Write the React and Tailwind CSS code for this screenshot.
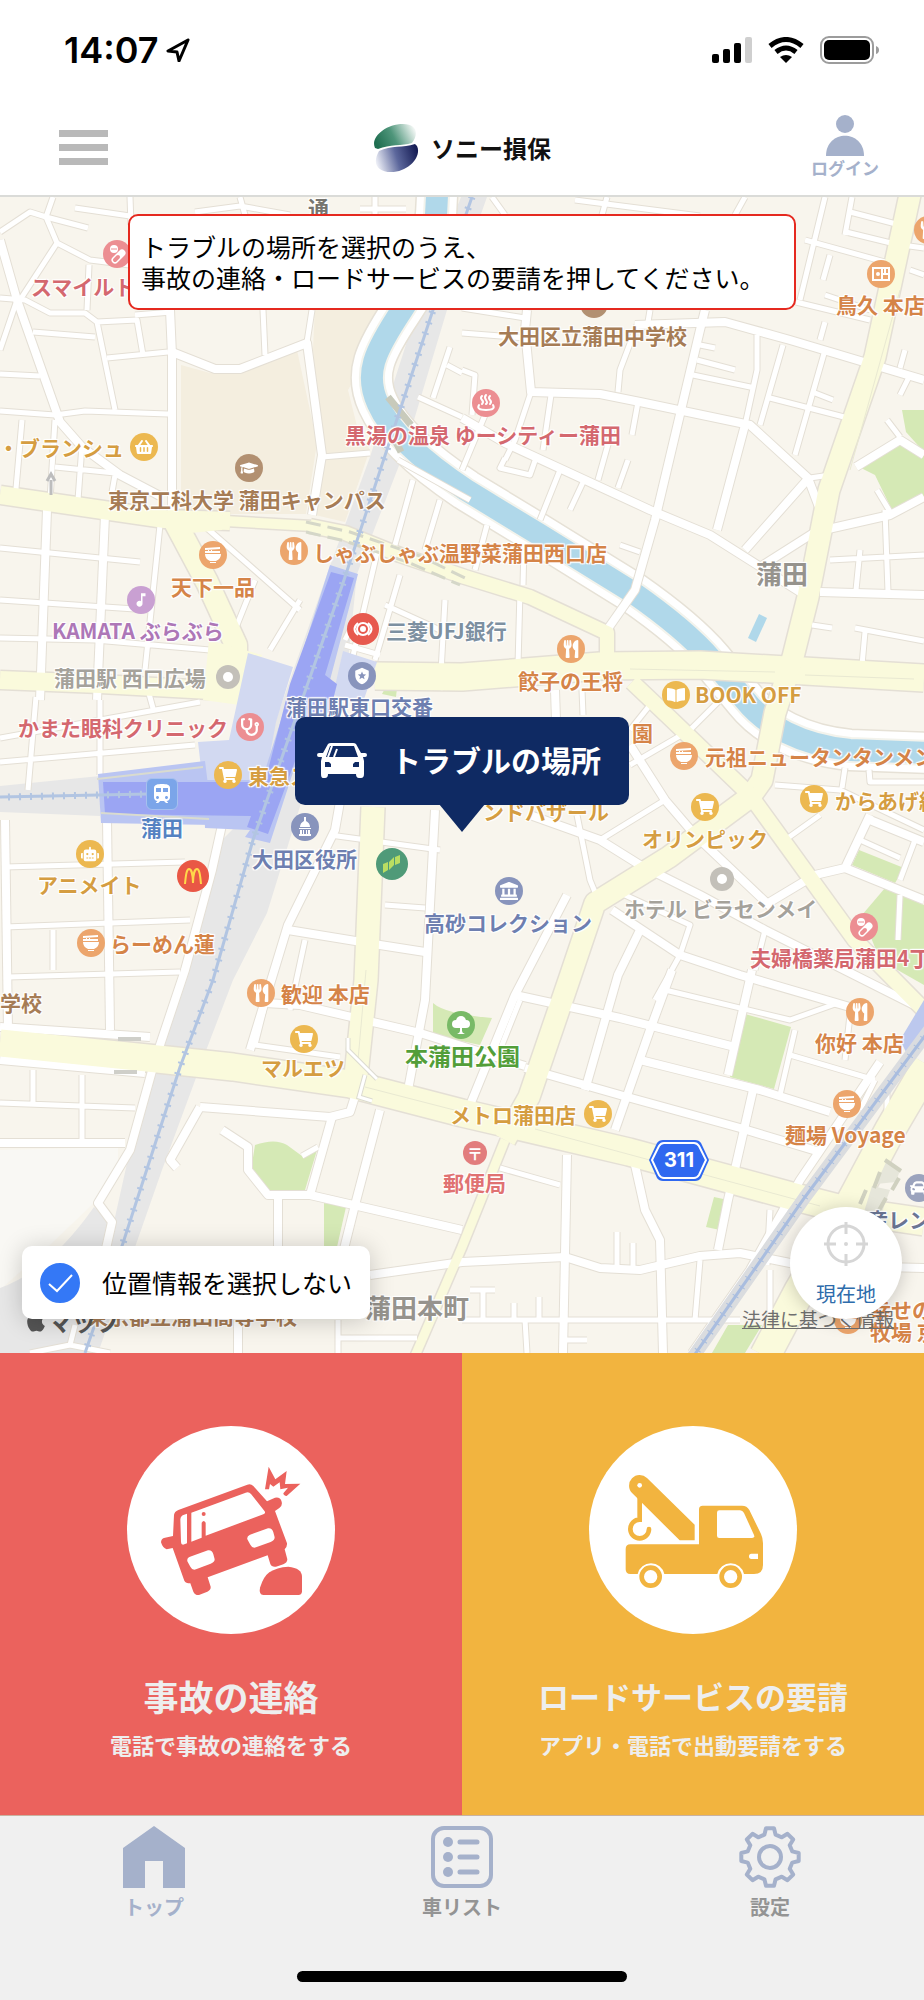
import React, { useState } from 'react';
import {
  FaUtensils,
  FaShoppingCart,
  FaShoppingBasket,
  FaGraduationCap,
  FaBookOpen,
  FaLandmark,
  FaStethoscope,
  FaRobot,
  FaCar,
  FaApple,
} from 'react-icons/fa';
import { MdMusicNote, MdTrain, MdLocalPolice } from 'react-icons/md';

// the map is drawn on this canvas, pins use the same units
const MAP = { x: 0, y: 197, w: 924, h: 1156 };

const river =
  'M437 190 C437 240 426 275 402 310 C374 352 364 374 378 404 C392 436 430 466 466 490 L540 535 L632 592 C665 615 695 640 712 660 L745 700 C765 725 800 745 850 750 L930 753';

const mainRail = 'M472 197 L433 310 L343 583 L253 840 L213 980 L180 1067 L123 1243 L85 1353';
const eastRail = 'M930 1029 L805 1197 L693 1357';

const wideRoads = [
  'M0 240 L17 300 L60 422 L82 447 L120 475 L160 496',
  'M170 310 L172 355 L172 515',
  'M172 352 L215 369 L240 369 L307 343 L322 455 L312 515',
  'M47 510 L40 700',
  'M105 515 L97 700',
  'M107 820 L110 1030',
  'M5 820 L8 1030',
  'M222 825 L212 870 L185 970 L155 1060 L130 1150 L98 1203 L112 1222 L103 1262',
  'M350 745 L335 830 L288 925 L250 1050',
  'M435 810 L425 1000 L408 1090',
  'M288 930 L380 945 L425 952',
  'M265 1003 L300 1005 L420 1033 L525 1066',
  'M525 1068 L620 1095 L740 1128 L820 1152',
  'M515 995 L620 1018 L735 1047',
  'M640 1060 L760 1090 L830 1112',
  'M567 895 L515 995 L468 1110',
  'M752 970 L728 1075 M753 1090 L728 1200 L718 1250',
  'M672 970 L650 1030 L615 1130',
  'M640 930 L618 975 L585 1090',
  'M630 745 L665 800 L695 835 L772 908',
  'M530 815 L600 840 L640 865 L700 895 L765 930 L924 1010',
  'M612 910 L680 955 L740 975 L860 1010',
  'M765 905 L815 875 L845 868 L870 815',
  'M870 820 L924 842 M845 868 L924 900',
  'M567 1155 L563 1353',
  'M635 1165 L645 1210 L660 1240 L663 1353',
  'M370 1275 L462 1262 L565 1257 L600 1268 L640 1270 L700 1256 L740 1253 L800 1265 L924 1268',
  'M200 1107 L330 1117 L350 1112 L357 1090',
  'M200 1107 L170 1160 L177 1168',
  'M222 1130 L248 1147 L248 1170 L268 1195 L310 1195 L462 1230',
  'M332 1117 L310 1195 M278 1195 L278 1260',
  'M380 1110 L355 1205 L340 1265',
  'M635 325 L725 322 L790 340 L924 380',
  'M705 310 L700 330 L655 520 L635 590 L607 630',
  'M527 310 L525 330 L531 392 L600 394 L640 402 L750 425 L808 478 L822 515',
  'M462 418 L505 443 L650 510 L710 535 L800 592',
  'M745 425 L717 530 M807 480 L745 550',
  'M760 567 L815 532 L890 515 L924 497',
  'M880 1062 L800 1180 L750 1270 L692 1353',
  'M238 1320 L238 1353',
  'M820 592 L924 595 M856 467 L900 440 L924 455',
  'M0 1060 L145 1073 M0 1143 L125 1143',
  'M0 1027 L150 1037',
  'M555 690 L556 720',
];

const narrowRoads = [
  'M0 232 L30 212 L46 217 M53 197 L46 217 L57 243 L20 300 M57 243 L90 260 L130 265',
  'M75 208 L130 216 M46 217 L88 228 M130 197 L131 225 M17 300 L0 350',
  'M0 298 L25 300 L50 313 L85 313 L97 322 L137 320 L143 355 M97 322 L115 410',
  'M33 332 L95 337 M107 358 L168 352 M89 265 L87 310 M0 374 L40 376',
  'M0 411 L55 415 L85 411 L168 414 M312 310 L307 342 M263 310 L265 355',
  'M172 312 L135 315 M322 457 L370 453 M195 212 L240 206 L290 215 M240 197 L245 215 M375 197 V215 M360 209 H406',
  'M22 420 L15 500 M55 420 L50 500 M55 467 L115 473 M82 445 L78 500 M115 475 L112 492',
  'M0 548 L140 562 M160 525 L145 670 M0 600 L150 610 M0 638 L95 640 L210 650',
  'M36 697 L28 790 M0 738 L200 702 M0 762 L195 745 M100 700 V775 M148 690 L154 712',
  'M5 867 L185 862 M5 927 L190 920 M8 977 L180 972 M53 930 V970',
  'M33 1070 V1105 M82 1075 V1140 M0 1103 L135 1108',
  'M330 835 L440 850 M385 905 L425 908 M305 940 L290 1010 M265 1005 L255 1045 L340 1057',
  'M318 1147 L302 1156 M338 1320 V1353 M338 1338 H417 M75 1325 L70 1345 L30 1353 M70 1345 L110 1353',
  'M400 575 L375 660 M385 605 L440 630 M345 645 L380 655 M355 620 L345 640 M445 600 L440 690',
  'M255 580 L235 630 M300 600 L270 650 M200 522 L300 610 M380 540 L345 690',
  'M582 690 L583 715 M650 705 L630 730 M720 700 L690 730 L630 765 M665 800 L600 840 M577 815 L590 880 L597 897',
  'M614 890 L690 925 L680 955 L655 1000 M765 930 L755 970 M665 990 L790 1020 L838 1003',
  'M520 1000 L500 1050 M795 1030 L780 1095 M790 1055 L875 1080 M850 1015 L845 1060 M875 1080 L860 1110 M887 1085 V1120',
  'M500 1168 L560 1185 M700 1260 L695 1320 M462 1320 H740 M525 1320 L527 1353 M617 1232 V1265 M633 1243 V1268',
  'M483 1290 V1318 M470 1290 H495 M514 1303 V1318 M539 1297 V1318 M770 1210 L767 1265 M805 1190 L770 1240 M770 1270 V1320 M565 1340 H587',
  'M775 785 L840 790 L924 830 M845 768 L842 788 M869 770 L870 782 H924 M860 840 L900 858 M915 840 L900 880 M820 815 L785 840 M900 895 L898 940',
  'M860 550 L856 590 M885 510 L888 592 M812 625 L832 628 M855 628 L924 641 M865 632 L862 665 M830 560 L924 555 M877 490 L892 515 M887 420 L900 437',
  'M745 197 L735 215 M607 197 L602 215 M492 197 L505 215 M575 200 L700 216 M825 197 L800 300 M805 240 L885 262 M852 197 L845 235 M850 212 L900 225 M846 232 L895 244 L924 248',
  'M830 255 L823 280 M825 295 L870 310 M796 302 L870 320 M910 270 L924 275 M637 325 L620 370 L618 392 M650 310 L648 322 M462 308 L525 318 M462 333 L525 338',
  'M531 392 L515 440 L505 460 M551 395 L543 450 M638 402 L632 435 M700 345 L715 348 M697 360 L735 370 M693 375 L755 388 M757 335 V370 L745 425',
  'M783 345 L760 425 M825 322 L820 340 M825 350 L795 455 M770 398 L848 418 M815 393 L833 400 M830 475 L810 478 M905 350 L900 368 M910 375 L900 395',
  'M505 458 L500 468 L530 475 L537 455 M560 470 L540 520 M585 478 L570 510 M612 430 L598 480 M628 460 L618 488 M462 470 L485 415 M462 370 L475 375 L472 415',
  'M450 347 L433 398 M447 365 L462 373 M418 397 L462 417 M398 460 L470 500 M413 480 L395 545 M440 500 L425 550 M487 525 L475 570 M524 545 L523 585 M520 590 L518 665 M620 545 L640 552',
];

const mainYellow = [
  { d: 'M0 495 L110 511 L165 519 L230 521', w: 18 },
  { d: 'M225 521 L312 526', w: 10 },
  { d: 'M310 526 L345 533 L400 555 L465 577 L530 597 L607 633 L607 665', w: 14 },
  { d: 'M0 680 L100 684 L210 690 L240 680', w: 18 },
  { d: 'M375 676 L462 677 L600 666 L700 665 L924 678', w: 27 },
  { d: 'M911 190 L875 357 L829 490 L808 597 L793 657 L775 713 L762 780 L750 797', w: 21 },
  { d: 'M632 682 L672 720 L750 795 L855 940 L930 1016', w: 15 },
  { d: 'M750 797 L669 857 L595 903 L569 980 L529 1097 L505 1140', w: 21 },
  { d: 'M505 1140 L462 1247 L415 1356', w: 9 },
  { d: 'M373 807 L366 980 L355 1085', w: 23 },
  { d: 'M175 522 L207 582 L236 645 L236 700', w: 22 },
  { d: 'M0 1043 L167 1060 L233 1067 L350 1084 L462 1113 L629 1152 L795 1197 L850 1211 L924 1222', w: 27 },
  { d: 'M928 1065 L890 1130 L850 1205 L800 1290 L765 1356', w: 30 },
];

const parks = [
  'M859 467 L902 440 L924 453 V497 L892 510 L875 475Z',
  'M902 410 L924 410 V452 L906 432Z',
  'M859 850 L904 868 L895 883 L852 865Z',
  'M885 888 L924 905 V985 L880 960 L862 915Z',
  'M433 1003 Q445 1014 492 1018 L480 1045 L433 1035Z',
  'M255 1145 Q275 1138 287 1145 L302 1156 L317 1150 L305 1190 H267 L251 1170Z',
  'M324 1203 L346 1207 L337 1247 H324Z',
  'M745 1014 L791 1027 L774 1089 L730 1077Z',
  'M714 1197 L728 1200 L720 1230 L706 1227Z',
  'M728 1325 H762 L745 1353 H712Z',
  'M354 388 Q362 410 378 422 L368 424 Q354 410 354 388Z',
  'M226 664 Q231 650 237 657 Q239 664 230 668Z',
  'M382 694 Q388 682 397 688 L396 697Z',
];

function MapDrawing() {
  return (
    <svg viewBox="0 197 924 1156" className="block h-full w-full" aria-hidden="true">
      <rect x={MAP.x} y={MAP.y} width={MAP.w} height={MAP.h} fill="#f8f5ed" />

      {/* school grounds */}
      <g fill="#f4eedf">
        <path d="M181 365 L210 373 L240 374 L297 350 L317 443 L306 514 H181Z" />
        <path d="M315 303 H390 L365 360 L348 390 L358 430 L370 450 L323 455 L313 350Z" />
        <path d="M325 460 L368 455 L345 522 L315 515Z" />
      </g>
      {parks.map((d) => (
        <path key={d} d={d} fill="#d5e9b5" />
      ))}
      <path d="M0 1150 L118 1147 L118 1162 L94 1203 L50 1245 L0 1290Z" fill="#f9f8f4" />

      {/* railway land */}
      <g fill="#e7e7e7">
        <path d="M461 197 H487 L447 310 L405 450 L357 574 L345 690 L302 800 L267 913 L233 980 L207 1048 L162 1170 L98 1353 H0 V1288 Q50 1270 94 1207 L112 1222 L105 1262 L130 1150 L160 1048 L203 913 L222 840 L240 822 L330 566 L370 457 L417 310Z" />
        <path d="M0 786 L100 776 V816 L0 812Z" />
      </g>

      <path d={river} fill="none" stroke="#e6e1d6" strokeWidth="43" />
      <path d={river} fill="none" stroke="#ffffff" strokeWidth="40" />
      <path d={river} fill="none" stroke="#f3f3ec" strokeWidth="26" />
      <path d={river} fill="none" stroke="#b0d8ea" strokeWidth="22" />
      <path d="M759 614 L767 618 L756 642 L748 638Z" fill="#b0d8ea" />

      <g fill="none" strokeLinejoin="round">
        <g stroke="#e4dfd5">
          {narrowRoads.map((d) => <path key={d} d={d} strokeWidth="7" />)}
          {wideRoads.map((d) => <path key={d} d={d} strokeWidth="10" />)}
          {mainYellow.map((r) => <path key={r.d} d={r.d} strokeWidth={r.w + 3} />)}
        </g>
        <g stroke="#ffffff">
          {narrowRoads.map((d) => <path key={d} d={d} strokeWidth="5" />)}
          {wideRoads.map((d) => <path key={d} d={d} strokeWidth="8" />)}
        </g>
        <g stroke="#fafadc">
          {mainYellow.map((r) => <path key={r.d} d={r.d} strokeWidth={r.w} />)}
        </g>
        <g stroke="#e9e9d2">
          <path d="M630 669 L775 672 M805 675 L914 679 M366 970 L358 1060 M365 1087 L462 1112 M535 1129 L820 1206 M900 290 L850 470" />
        </g>
      </g>
      <path d="M209 640 L262 655 L240 705 L203 700Z" fill="#fafadc" />
      <path d="M165 512 L225 516 L222 530 L170 535Z" fill="#fafadc" />

      {/* footbridges */}
      <path d="M348 1038 V1050 L377 1079 M365 1075 L359 1097 L372 1101" fill="none" stroke="#dcdbd0" strokeWidth="5" />
      <path d="M348 1038 V1050 L377 1079 M365 1075 L359 1097 L372 1101" fill="none" stroke="#fff" strokeWidth="3" />
      <g stroke="#d5d7c8" strokeWidth="3" strokeDasharray="15 7" fill="none">
        <path d="M306 522 L350 532 L420 556 L465 578" />
        <path d="M306 532 L345 541 L410 563 L460 585" />
      </g>
      <path d="M118 1039 H141 M114 1072 H137" stroke="#cfcfc9" strokeWidth="4" />
      <path d="M388 397 L411 425 M395 440 L401 452" stroke="#c8cabb" strokeWidth="7" />
      <path d="M887 1160 L900 1170 L896 1182 L876 1184Z M872 1186 L890 1190 L882 1212 H864Z" fill="#e6e6da" />
      <path d="M885 1160 L901 1171 M880 1172 L874 1188 M899 1178 L892 1190 M866 1190 L860 1204 M886 1198 L878 1212" stroke="#d0d1c0" strokeWidth="4" />

      {/* station buildings */}
      <path d="M248 653 L293 667 L276 722 L265 782 L203 785 L198 742 L229 740Z" fill="#d2d9f1" />
      <path d="M343 651 L377 662 L363 702 L333 695Z" fill="#d2d9f1" />
      <path d="M98 774 L205 761 L213 825 L101 823Z" fill="#bac5f2" />
      <path d="M330 565 L358 574 L330 680 L337 710 L310 720 L270 843 L245 837 L250 830 L205 828 L203 780 L262 780Z" fill="#bac5f2" />
      <path d="M331 572 L354 578 L325 675 L337 684 L330 712 L311 718 L268 834 L247 827 L251 816 L105 814 L103 782 L265 782 L290 684Z" fill="#9ba5f3" />
      <path d="M97 779 L203 767 M101 813 L209 819" stroke="#d9dbcf" strokeWidth="2" />
      <path d="M900 1040 L924 1000 V1035 L908 1056Z" fill="#bcc8ee" />

      {/* tracks with sleepers */}
      <g fill="none">
        <path d={eastRail} stroke="#dadcdf" strokeWidth="13" />
        <path d={eastRail} stroke="#a9bddf" strokeWidth="3" />
        <path d={eastRail} stroke="#a9bddf" strokeWidth="7" strokeDasharray="1 10" />
        <path d={mainRail} stroke="#b2c5e2" strokeWidth="3" />
        <path d={mainRail} stroke="#b2c5e2" strokeWidth="7" strokeDasharray="2 9" />
        <path d="M0 797 L148 794" stroke="#b2c5e2" strokeWidth="3" />
        <path d="M8 797 L148 794" stroke="#b2c5e2" strokeWidth="7" strokeDasharray="2 9" />
      </g>
      <path d="M51 495 V480 M47 481 L51 474 L55 481" fill="none" stroke="#bdbdbd" strokeWidth="3" />

      {/* road shield */}
      <path d="M663 1140 H695 Q699 1140 701 1143 L709 1160 L701 1178 Q699 1181 695 1181 H663 Q659 1181 657 1178 L649 1160 L657 1143 Q659 1140 663 1140Z" fill="#2f68f0" />
      <path d="M664 1143 H694 Q697 1143 699 1146 L706 1160 L699 1175 Q697 1178 694 1178 H664 Q661 1178 659 1175 L652 1160 L659 1146 Q661 1143 664 1143Z" fill="none" stroke="#fff" strokeWidth="2" />
    </svg>
  );
}

const HotSpring = () => (
  <svg viewBox="0 0 20 20" className="h-5 w-5" fill="none" stroke="currentColor" strokeWidth="2" strokeLinecap="round">
    <path d="M6 3q-2 2 0 4t0 4M10 2q-2 2 0 5t0 4M14 3q-2 2 0 4t0 4" />
    <path d="M3 12q-3 5 7 5t7-5" />
  </svg>
);

const Arches = () => (
  <svg viewBox="0 0 20 20" className="h-5 w-5" fill="none" stroke="#ffd84a" strokeWidth="2">
    <path d="M2 18C3 7 4 3 6 3s4 5 4 14c0-9 2-14 4-14s3 4 4 15" />
  </svg>
);

const BankMark = () => (
  <svg viewBox="0 0 20 20" className="h-5 w-5" fill="none" stroke="currentColor" strokeWidth="2">
    <circle cx="10" cy="10" r="6" />
    <circle cx="10" cy="10" r="2" fill="currentColor" />
    <path d="M5 4Q-2 10 5 16M15 4q7 6 0 12" />
  </svg>
);

const GreenBank = () => (
  <svg viewBox="0 0 20 20" className="h-5 w-5" fill="#b9dd62">
    <path d="M1 10l5-2v8l-5 3zM7 8l5-5v8l-5 5zM13 3l5-2v8l-5 2z" />
  </svg>
);

const DomeHall = () => (
  <svg viewBox="0 0 20 20" className="h-5 w-5" fill="currentColor">
    <path d="M9 0h2v4q4 2 4 6H5q0-4 4-6zM4 11h12v1H4zM5 13h2v4H5zM8 13h1v4H8zM11 13h1v4h-1zM13 13h2v4h-2zM4 17h12v2H4z" />
  </svg>
);

const Pills = () => (
  <svg viewBox="0 0 20 20" className="h-5 w-5">
    <circle cx="7" cy="5" r="4" fill="currentColor" />
    <path d="M4 5h6" stroke="#ec8e92" strokeWidth="1" />
    <path d="M8 16L15 9" stroke="currentColor" strokeWidth="7" strokeLinecap="round" />
    <path d="M8 16l3-3" stroke="#ec8e92" strokeWidth="4" strokeLinecap="round" />
  </svg>
);

const Ramen = () => (
  <svg viewBox="0 0 20 20" className="h-5 w-5" fill="currentColor">
    <path d="M2 3l15-1v2L2 5zM2 6h15v2H2zM5 3h1v5H5zM8 3h1v5H8z" />
    <path d="M2 9h16q0 5-5 7H7q-5-2-5-7zM7 17h6v1H7z" />
  </svg>
);

const Bento = () => (
  <svg viewBox="0 0 20 20" className="h-5 w-5" fill="none" stroke="currentColor" strokeWidth="2">
    <rect x="2" y="4" width="16" height="12" />
    <path d="M11 4v12M11 10h7M14 4v6" />
    <circle cx="7" cy="10" r="1" fill="currentColor" />
  </svg>
);

const Tree = () => (
  <svg viewBox="0 0 20 20" className="h-5 w-5" fill="currentColor">
    <circle cx="5" cy="9" r="4" />
    <circle cx="10" cy="6" r="5" />
    <circle cx="15" cy="9" r="4" />
    <path d="M5 10h10v3H5zM9 12h2v4q0 2 3 3H6q3-1 3-3z" />
  </svg>
);

const Dot = () => <span className="block h-[10px] w-[10px] rounded-full bg-white" />;
const Post = () => <span className="text-base font-bold leading-none">〒</span>;

const pins = [
  { x: 117, y: 254, bg: 'bg-[#ec8e92]', Icon: Pills },
  { x: 144, y: 447, bg: 'bg-[#ecb850]', Icon: FaShoppingBasket },
  { x: 249, y: 468, bg: 'bg-[#b29071]', Icon: FaGraduationCap },
  { x: 213, y: 555, bg: 'bg-[#eca56c]', Icon: Ramen },
  { x: 294, y: 551, bg: 'bg-[#eca56c]', Icon: FaUtensils },
  { x: 486, y: 403, bg: 'bg-[#ec8e92]', Icon: HotSpring },
  { x: 594, y: 304, bg: 'bg-[#b29071]', Icon: FaGraduationCap },
  { x: 881, y: 274, bg: 'bg-[#eca56c]', Icon: Bento },
  { x: 928, y: 230, bg: 'bg-[#eca56c]', Icon: FaUtensils },
  { x: 141, y: 600, bg: 'bg-[#c9a0d2]', Icon: MdMusicNote },
  { x: 363, y: 629, bg: 'bg-[#e7594e]', Icon: BankMark, big: true },
  { x: 362, y: 676, bg: 'bg-[#8894bc]', Icon: MdLocalPolice },
  { x: 228, y: 677, bg: 'bg-[#c3c0b9]', Icon: Dot, small: true },
  { x: 250, y: 727, bg: 'bg-[#ec8e92]', Icon: FaStethoscope },
  { x: 228, y: 775, bg: 'bg-[#ecb850]', Icon: FaShoppingCart },
  { x: 90, y: 854, bg: 'bg-[#ecb850]', Icon: FaRobot },
  { x: 193, y: 876, bg: 'bg-[#e95745]', Icon: Arches, big: true },
  { x: 305, y: 827, bg: 'bg-[#8894bc]', Icon: DomeHall },
  { x: 392, y: 864, bg: 'bg-[#4f9a78]', Icon: GreenBank, big: true },
  { x: 91, y: 943, bg: 'bg-[#eca56c]', Icon: Ramen },
  { x: 571, y: 649, bg: 'bg-[#eca56c]', Icon: FaUtensils },
  { x: 676, y: 695, bg: 'bg-[#ecb850]', Icon: FaBookOpen },
  { x: 684, y: 756, bg: 'bg-[#eca56c]', Icon: Ramen },
  { x: 705, y: 807, bg: 'bg-[#ecb850]', Icon: FaShoppingCart },
  { x: 814, y: 799, bg: 'bg-[#ecb850]', Icon: FaShoppingCart },
  { x: 722, y: 879, bg: 'bg-[#c3c0b9]', Icon: Dot, small: true },
  { x: 864, y: 927, bg: 'bg-[#ec8e92]', Icon: Pills },
  { x: 509, y: 891, bg: 'bg-[#8894bc]', Icon: FaLandmark },
  { x: 261, y: 993, bg: 'bg-[#eca56c]', Icon: FaUtensils },
  { x: 304, y: 1039, bg: 'bg-[#ecb850]', Icon: FaShoppingCart },
  { x: 461, y: 1025, bg: 'bg-[#78ba66]', Icon: Tree },
  { x: 475, y: 1153, bg: 'bg-[#e27d7d]', Icon: Post, small: true },
  { x: 598, y: 1114, bg: 'bg-[#ecb850]', Icon: FaShoppingCart },
  { x: 860, y: 1012, bg: 'bg-[#eca56c]', Icon: FaUtensils },
  { x: 847, y: 1104, bg: 'bg-[#eca56c]', Icon: Ramen },
  { x: 919, y: 1188, bg: 'bg-[#9ba3bd]', Icon: FaCar },
  { x: 848, y: 1320, bg: 'bg-[#eca56c]', Icon: Ramen },
];

const ORANGE = 'text-[#d58448]';
const AMBER = 'text-[#d59d41]';
const PINK = 'text-[#d4686f]';
const BROWN = 'text-[#a67c55]';
const NAVY = 'text-[#6e7fb0]';
const GRAY = 'text-[#a5a29b]';

const places = [
  { x: 308, y: 208, name: '通', color: 'text-[#77756f]' },
  { x: 31, y: 287, name: 'スマイルト', color: PINK },
  { x: -2, y: 448, name: '・ブランシュ', color: AMBER },
  { x: 108, y: 500, name: '東京工科大学 蒲田キャンパス', color: BROWN },
  { x: 171, y: 587, name: '天下一品', color: ORANGE },
  { x: 313, y: 553, name: 'しゃぶしゃぶ温野菜蒲田西口店', color: ORANGE },
  { x: 345, y: 435, name: '黒湯の温泉 ゆーシティー蒲田', color: PINK },
  { x: 498, y: 336, name: '大田区立蒲田中学校', color: BROWN },
  { x: 836, y: 305, name: '鳥久 本店', color: ORANGE },
  { x: 52, y: 631, name: 'KAMATA ぶらぶら', color: 'text-[#ad77b7]' },
  { x: 386, y: 631, name: '三菱UFJ銀行', color: 'text-[#7d90a1]' },
  { x: 286, y: 707, name: '蒲田駅東口交番', color: NAVY },
  { x: 54, y: 678, name: '蒲田駅 西口広場', color: GRAY },
  { x: 18, y: 728, name: 'かまた眼科クリニック', color: PINK },
  { x: 248, y: 776, name: '東急スト', color: AMBER },
  { x: 141, y: 828, name: '蒲田', color: 'text-[#5582c2]' },
  { x: 37, y: 885, name: 'アニメイト', color: AMBER },
  { x: 252, y: 859, name: '大田区役所', color: NAVY },
  { x: 110, y: 944, name: 'らーめん蓮', color: ORANGE },
  { x: 518, y: 681, name: '餃子の王将', color: ORANGE },
  { x: 695, y: 695, name: 'BOOK OFF', color: AMBER },
  { x: 632, y: 733, name: '園', color: ORANGE },
  { x: 705, y: 757, name: '元祖ニュータンタンメン', color: ORANGE },
  { x: 642, y: 839, name: 'オリンピック', color: AMBER },
  { x: 835, y: 801, name: 'からあげ縁', color: AMBER },
  { x: 483, y: 812, name: 'ンドバザール', color: AMBER },
  { x: 624, y: 909, name: 'ホテル ビラセンメイ', color: GRAY },
  { x: 750, y: 958, name: '夫婦橋薬局蒲田4丁目', color: PINK },
  { x: 424, y: 923, name: '高砂コレクション', color: NAVY },
  { x: 0, y: 1003, name: '学校', color: BROWN },
  { x: 281, y: 994, name: '歓迎 本店', color: ORANGE },
  { x: 261, y: 1068, name: 'マルエツ', color: AMBER },
  { x: 443, y: 1183, name: '郵便局', color: 'text-[#e07272]' },
  { x: 450, y: 1115, name: 'メトロ蒲田店', color: AMBER },
  { x: 815, y: 1043, name: '你好 本店', color: ORANGE },
  { x: 785, y: 1135, name: '麺場 Voyage', color: ORANGE },
  { x: 867, y: 1220, name: '産レン', color: 'text-[#6b7694]' },
  { x: 870, y: 1310, name: '幸せの', color: ORANGE },
  { x: 870, y: 1332, name: '牧場 京', color: ORANGE },
  { x: 87, y: 1316, name: '東京都立蒲田高等学校', color: BROWN },
];

const districts = [
  { x: 756, y: 574, name: '蒲田', style: 'text-[26px] text-[#96938d]' },
  { x: 365, y: 1308, name: '蒲田本町', style: 'text-[26px] text-[#96938d]' },
  { x: 405, y: 1056, name: '本蒲田公園', style: 'text-[23px] text-[#539e39]' },
];

const place = (p) => ({
  left: `${((p.x - MAP.x) / MAP.w) * 100}%`,
  top: `${((p.y - MAP.y) / MAP.h) * 100}%`,
});

function pinSize(pin) {
  if (pin.big) return 'h-8 w-8 text-xl';
  if (pin.small) return 'h-6 w-6 text-sm';
  return 'h-7 w-7 text-lg';
}

function StatusBar() {
  return (
    <div className="flex h-[100px] items-center justify-between pl-16 pr-11">
      <div className="flex items-center gap-2">
        <span className="font-[Inter] text-[36px] font-semibold leading-none">14:07</span>
        <svg viewBox="0 0 24 24" className="h-6 w-6" fill="none" stroke="#000" strokeWidth="3" strokeLinejoin="round">
          <path d="M22 2L2 13l9 1 2 9z" />
        </svg>
      </div>
      <div className="flex items-center gap-4">
        <svg viewBox="0 0 40 26" className="h-[26px] w-10">
          <rect x="0" y="17" width="7" height="9" rx="2" />
          <rect x="11" y="12" width="7" height="14" rx="2" />
          <rect x="22" y="6" width="7" height="20" rx="2" />
          <rect x="33" y="0" width="7" height="26" rx="2" fill="#cfcfcf" />
        </svg>
        <svg viewBox="0 0 36 26" className="h-[26px] w-9" fill="none" stroke="#000" strokeWidth="5">
          <path d="M2 9Q18-4 34 9" />
          <path d="M8 15Q18 7 28 15" />
          <path d="M18 26l-6-6q6-4 12 0z" fill="#000" stroke="none" />
        </svg>
        <svg viewBox="0 0 60 28" className="h-7 w-[60px]">
          <rect x="1" y="1" width="52" height="26" rx="8" fill="none" stroke="#9c9c9c" strokeWidth="2" />
          <rect x="4" y="4" width="46" height="20" rx="5" />
          <path d="M56 10q3 1 3 4t-3 4z" fill="#9c9c9c" />
        </svg>
      </div>
    </div>
  );
}

function Header() {
  return (
    <header className="grid h-[97px] grid-cols-3 items-center border-b-2 border-[#dadbd8]">
      <button type="button" aria-label="メニュー" className="ml-[59px] flex w-[49px] flex-col gap-[7px]">
        <span className="h-[7px] bg-[#b9b9b9]" />
        <span className="h-[7px] bg-[#b9b9b9]" />
        <span className="h-[7px] bg-[#b9b9b9]" />
      </button>
      <h1 className="flex items-center justify-center gap-3">
        <svg viewBox="0 0 46 48" className="h-12 w-[46px]" aria-hidden="true">
          <defs>
            <linearGradient id="leafGreen" x1="0" y1=".6" x2="1" y2=".3">
              <stop offset="0" stopColor="#1f6e50" />
              <stop offset=".45" stopColor="#4e957a" />
              <stop offset="1" stopColor="#f4f8f6" />
            </linearGradient>
            <linearGradient id="leafBlue" x1="0" y1=".6" x2="1" y2=".4">
              <stop offset="0" stopColor="#eceef6" />
              <stop offset=".5" stopColor="#5c679c" />
              <stop offset="1" stopColor="#161d55" />
            </linearGradient>
          </defs>
          <path d="M2 24C-3 14 12 0 30 0c14 0 16 10 9 19-10 3-22 1-34 6z" fill="url(#leafGreen)" />
          <path d="M44 22c5 10-8 26-26 26C4 48-1 39 6 27c12-6 24-3 36-7z" fill="url(#leafBlue)" />
        </svg>
        <span className="text-2xl font-bold text-[#111]">ソニー損保</span>
      </h1>
      <a href="#login" className="mr-[45px] flex flex-col items-center justify-self-end text-[#a5b1cb]">
        <svg viewBox="0 0 38 41" className="h-[41px] w-[38px]" fill="currentColor" aria-hidden="true">
          <circle cx="19" cy="9" r="9" />
          <path d="M0 41C0 14 38 14 38 41z" />
        </svg>
        <span className="text-[17px] font-bold leading-6">ログイン</span>
      </a>
    </header>
  );
}

function Callout() {
  return (
    <div className="absolute left-1/2 top-[45%] flex w-[334px] -translate-x-1/2 flex-col items-center">
      <div className="flex h-[88px] w-full items-center gap-6 rounded-[10px] bg-[#0f2a63] px-[22px] text-white">
        <svg viewBox="0 0 50 36" className="h-9 w-[50px]" aria-hidden="true">
          <path
            fillRule="evenodd"
            fill="#fff"
            d="M11 1Q12 0 14 0H36Q38 0 39 1L44 10H48Q50 10 50 12T48 14L46 14L47 18V31Q47 35 44 35H42Q39 35 39 31H11Q11 35 8 35H6Q4 35 4 31V18L5 14H2Q0 14 0 12T2 10H6ZM13 3L9 14H41L37 3ZM8 19V24H14V21L12 19ZM42 19V24H36V21L38 19Z"
          />
          <path d="M15 3L11 14M20 6L17 14" stroke="#fff" strokeWidth="2" />
        </svg>
        <span className="pb-1 text-3xl font-bold">トラブルの場所</span>
      </div>
      <svg viewBox="0 0 46 28" className="-mt-px h-7 w-[46px]" aria-hidden="true">
        <path d="M0 0H46L23 28Z" fill="#0f2a63" />
      </svg>
    </div>
  );
}

function TroubleMap() {
  const [skipLocation, setSkipLocation] = useState(true);

  return (
    <section className="relative aspect-[924/1156] w-full overflow-hidden">
      <MapDrawing />

      <ul>
        {pins.map((pin, index) => (
          <li
            key={index}
            style={place(pin)}
            className={`absolute flex -translate-x-1/2 -translate-y-1/2 items-center justify-center rounded-full text-white ${pin.bg} ${pinSize(pin)}`}
          >
            <pin.Icon />
          </li>
        ))}
        <li
          style={place({ x: 162, y: 794 })}
          className="absolute flex h-8 w-8 -translate-x-1/2 -translate-y-1/2 items-center justify-center rounded-md border border-[#a6c0ef] bg-[#7ba5e9] text-2xl text-white"
        >
          <MdTrain />
        </li>
      </ul>

      <ul className="text-[21px] font-bold leading-6 [text-shadow:0_0_2px_#fff,1px_1px_1px_#fff,-1px_-1px_1px_#fff,1px_-1px_1px_#fff,-1px_1px_1px_#fff]">
        {places.map((p, index) => (
          <li key={index} style={place(p)} className={`absolute -translate-y-1/2 whitespace-nowrap pb-[3px] ${p.color}`}>
            {p.name}
          </li>
        ))}
        {districts.map((p) => (
          <li key={p.name} style={place(p)} className={`absolute -translate-y-1/2 whitespace-nowrap pb-[3px] ${p.style}`}>
            {p.name}
          </li>
        ))}
      </ul>
      <span
        style={place({ x: 679, y: 1160 })}
        className="absolute -translate-x-1/2 -translate-y-1/2 font-[Inter] text-xl font-bold leading-none text-white"
      >
        311
      </span>

      <p className="absolute inset-x-[128px] top-[17px] flex min-h-24 items-center rounded-[10px] border-2 border-[#e5291f] bg-white px-[11px] text-[25px] leading-[31px] text-black">
        <span>
          トラブルの場所を選択のうえ、
          <br />
          事故の連絡・ロードサービスの要請を押してください。
        </span>
      </p>

      <Callout />

      <div className="absolute bottom-4 left-6 flex items-center text-2xl font-bold leading-8 text-[#555]">
        <FaApple />
        マップ
      </div>
      <a href="#legal" className="absolute bottom-5 right-[30px] text-[19px] leading-7 text-[#6f6f6f] underline">
        法律に基づく情報
      </a>

      <label className="absolute bottom-[34px] left-[22px] flex h-[73px] items-center gap-[22px] rounded-[10px] bg-white px-[18px] text-[25px] text-black shadow-[0_2px_24px_rgba(0,0,0,0.2)]">
        <span className="relative block h-10 w-10">
          <input
            type="checkbox"
            checked={skipLocation}
            onChange={(e) => setSkipLocation(e.target.checked)}
            className="block h-10 w-10 appearance-none rounded-full border-2 border-[#3478f6] checked:bg-[#3478f6]"
          />
          <svg viewBox="0 0 40 40" className="pointer-events-none absolute inset-0" fill="none" stroke="#fff" strokeWidth="2">
            <path d="M9 21L17 28L32 12" />
          </svg>
        </span>
        位置情報を選択しない
      </label>

      <button
        type="button"
        className="absolute bottom-[34px] right-[22px] flex h-28 w-28 flex-col items-center rounded-full bg-white pt-[15px] text-[#2e6cab] shadow-[0_2px_18px_rgba(0,0,0,0.2)]"
      >
        <svg viewBox="0 0 44 44" className="h-11 w-11" fill="none" stroke="#d6d6d6" strokeWidth="3" aria-hidden="true">
          <circle cx="22" cy="22" r="18" />
          <path d="M22 0v12M22 32v12M0 22h12M32 22h12" />
          <circle cx="22" cy="22" r="2" fill="#d6d6d6" stroke="none" />
        </svg>
        <span className="mt-[14px] text-xl leading-7">現在地</span>
      </button>
    </section>
  );
}

const CrashArt = () => (
  <svg viewBox="381 228 624 624" className="h-[208px] w-[208px]" aria-hidden="true">
    <circle cx="693" cy="540" r="312" fill="#fff" />
    <g fill="#eb625d">
      <path d="M522 495Q523 485 535 480L742 404Q752 400 760 408L801 454L825 443Q841 440 845 455Q848 468 838 474L825 483L861 580Q862 590 854 598L862 628Q862 638 850 643L828 650Q815 652 811 642L803 616L623 682L632 710Q633 720 622 725L597 735Q585 736 580 725L571 700Q557 700 553 692L518 594L500 598Q488 594 483 577Q483 565 495 563L519 558Z" />
      <path d="M806 350L826 388L860 363L855 402L901 401L860 438Q850 437 850 430L864 413L841 418L839 397L820 410L810 402L807 418H795Z" />
      <path d="M780 713Q790 680 808 667Q830 652 865 650Q906 654 906 680V724Q906 735 895 735H790Q776 733 780 713Z" />
    </g>
    <g fill="#fff">
      <path d="M541 508Q541 500 548 496L561 491V580L549 584Q543 584 543 576Z" />
      <path d="M574 488L737 428Q747 425 753 432L794 484Q798 490 790 493L617 557V518Q611 508 605 518V563L574 575Z" />
      <path d="M570 620L624 601Q636 599 640 613L644 628Q644 637 632 641L588 658Q577 662 571 650L562 634Q560 624 570 620Z" />
      <path d="M750 554L804 535Q816 533 820 547L824 562Q824 571 812 576L768 592Q757 596 751 584L742 568Q740 558 750 554Z" />
    </g>
    <circle cx="611" cy="492" r="6" fill="#eb625d" />
  </svg>
);

const TowArt = () => (
  <svg viewBox="381 228 624 624" className="h-[208px] w-[208px]" aria-hidden="true">
    <circle cx="693" cy="540" r="312" fill="#fff" />
    <g fill="#f2b43f">
      <path d="M511 430A31 31 0 0 1 555 384L698 524V571H653Z" />
      <path d="M711 583V478Q711 467 722 467H840Q855 467 862 480L897 552Q903 565 903 580V645Q903 672 876 672H846A41 41 0 0 0 766 672H607A41 41 0 0 0 527 672H505Q491 672 491 658V597Q491 583 505 583Z" />
    </g>
    <g fill="none" stroke="#f2b43f" strokeWidth="14" strokeLinecap="round">
      <path d="M533 430V509A28 28 0 1 0 561 537" />
      <circle cx="566" cy="680" r="27" />
      <circle cx="806" cy="680" r="27" />
    </g>
    <g fill="#fff">
      <circle cx="533" cy="406" r="7" />
      <path d="M772 481H834Q842 481 846 489L876 555Q879 564 870 564H772Q765 564 765 557V488Q765 481 772 481Z" />
      <path d="M888 611V627H868Q861 627 861 619T868 611Z" />
    </g>
  </svg>
);

function Actions() {
  return (
    <section className="grid grid-cols-2 font-bold text-[#eeeeee]">
      <button type="button" className="flex aspect-square flex-col items-center bg-[#eb625d] pt-[73px]">
        <CrashArt />
        <span className="mt-[38px] text-[35px] leading-[48px]">事故の連絡</span>
        <span className="mt-2 text-[22px] leading-8">電話で事故の連絡をする</span>
      </button>
      <button type="button" className="flex aspect-square flex-col items-center bg-[#f2b43f] pt-[73px]">
        <TowArt />
        <span className="mt-[38px] text-[31px] leading-[48px]">ロードサービスの要請</span>
        <span className="mt-2 text-[22px] leading-8">アプリ・電話で出動要請をする</span>
      </button>
    </section>
  );
}

// eight teeth, four corners each
const gearPoints = Array.from({ length: 8 }, (_, i) =>
  [[-14, 23], [-8, 29], [8, 29], [14, 23]].map(([turn, r]) => {
    const a = ((i * 45 + turn) * Math.PI) / 180;
    return `${(32 + r * Math.sin(a)).toFixed(1)},${(32 - r * Math.cos(a)).toFixed(1)}`;
  }).join(' ')
).join(' ');

function TabBar() {
  return (
    <footer className="flex flex-1 flex-col items-center border-t border-[#c9b2a0] bg-[#f0f0f0]">
      <nav className="grid w-full grid-cols-3 pt-[9px] text-xl font-bold leading-9 text-[#949494]">
        <a href="#top" className="flex flex-col items-center text-[#a5b1cb]">
          <svg viewBox="0 0 64 64" className="h-16 w-16" fill="currentColor" aria-hidden="true">
            <path d="M32 1L63 23V63H41V36H23V63H1V23Z" />
          </svg>
          トップ
        </a>
        <a href="#cars" className="flex flex-col items-center">
          <svg viewBox="0 0 64 64" className="h-16 w-16 text-[#a5b1cb]" fill="none" stroke="currentColor" strokeWidth="4" aria-hidden="true">
            <rect x="3" y="3" width="58" height="58" rx="11" />
            <path d="M30 17H47M30 32H47M30 47H47" strokeWidth="5" strokeLinecap="round" />
            <g fill="currentColor" stroke="none">
              <circle cx="18" cy="17" r="5" />
              <circle cx="18" cy="32" r="5" />
              <circle cx="18" cy="47" r="5" />
            </g>
          </svg>
          車リスト
        </a>
        <a href="#settings" className="flex flex-col items-center">
          <svg viewBox="0 0 64 64" className="h-16 w-16 text-[#a5b1cb]" fill="none" stroke="currentColor" strokeWidth="4" strokeLinejoin="round" aria-hidden="true">
            <polygon points={gearPoints} />
            <circle cx="32" cy="32" r="11" />
          </svg>
          設定
        </a>
      </nav>
      <div className="mb-[18px] mt-auto h-[11px] w-[330px] rounded-full bg-black" />
    </footer>
  );
}

const App = () => {
  return (
    <div className="flex min-h-screen flex-col bg-white font-['Noto_Sans_CJK_JP',sans-serif] text-black">
      <StatusBar />
      <Header />
      <main>
        <TroubleMap />
        <Actions />
      </main>
      <TabBar />
    </div>
  );
};

export default App;
